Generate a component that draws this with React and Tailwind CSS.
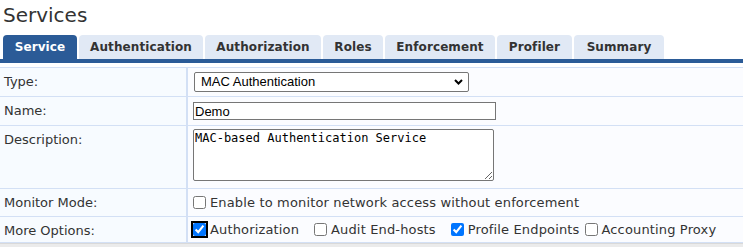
import React from 'react';

const tabs = [
  { label: 'Service', w: 'w-[74px]', active: true },
  { label: 'Authentication', w: 'w-[124px]' },
  { label: 'Authorization', w: 'w-[116px]' },
  { label: 'Roles', w: 'w-[60px]' },
  { label: 'Enforcement', w: 'w-[110px]' },
  { label: 'Profiler', w: 'w-[75px]' },
  { label: 'Summary', w: 'w-[90px]' },
];

const Check = ({ checked, focused, label, className = '' }) => (
  <label className={`flex items-center ${className}`}>
    <input
      type="checkbox"
      defaultChecked={checked}
      className={`m-0 h-[13px] w-[13px] accent-[#0075ff] ${focused ? 'rounded-[2px] outline-2 outline-offset-0 outline-black' : ''}`}
    />
    <span className="ml-[4px] tracking-[0.15px]">{label}</span>
  </label>
);

const Row = ({ label, h, children, valueClass = '' }) => (
  <div className={`flex border-b border-[#d3e0f5] ${h}`}>
    <div className="w-[187px] shrink-0 border-r border-[#d3e0f5] bg-[#f7fbff] pl-[4px] pt-[6px]">{label}</div>
    <div className={`flex-1 border-l border-[#d3e0f5] bg-[#fbfcff] pl-[5px] ${valueClass}`}>{children}</div>
  </div>
);

const App = () => {
  return (
    <div className="h-[247px] w-[743px] overflow-hidden bg-white text-[13px] leading-[16px] text-[#333] [font-family:'DejaVu_Sans',Verdana,sans-serif]">
      <h1 className="h-[35px] pl-[3px] pt-[3px] text-[20px] leading-[24px] text-[#333]">Services</h1>

      <div className="flex gap-[2px] pl-[3px]">
        {tabs.map((t) => (
          <div
            key={t.label}
            className={`flex h-[24px] items-center justify-center rounded-t-[4px] text-[12px] font-bold tracking-[0.1px] ${t.w} ${
              t.active ? 'bg-[#2b5b97] text-white' : 'bg-[#e1e9f5] text-[#333]'
            }`}
          >
            {t.label}
          </div>
        ))}
      </div>
      <div className="h-[4px] bg-[#2b5b97]" />

      <div className="mt-[4px] border-t border-[#d3e0f5]">
        <Row label="Type:" h="h-[29px]" valueClass="pt-[4px]">
          <div className="relative ml-[1px] h-[20px] w-[275px]">
            <select className="h-[20px] w-[275px] appearance-none rounded-[2px] border border-[#767676] bg-white pl-[6px] text-[13px] text-black [font-family:'Liberation_Sans',Arial,sans-serif]">
              <option>MAC Authentication</option>
            </select>
            <svg className="pointer-events-none absolute right-[6px] top-[7px]" width="9" height="6" viewBox="0 0 9 6">
              <path d="M1 1l3.5 3.5L8 1" fill="none" stroke="#000" strokeWidth="2" />
            </svg>
          </div>
        </Row>
        <Row label="Name:" h="h-[29px]" valueClass="pt-[5px]">
          <input
            defaultValue="Demo"
            className="h-[18px] w-[303px] border border-[#767676] bg-white pl-[1px] text-[13px] leading-[16px] text-black [font-family:'Liberation_Sans',Arial,sans-serif]"
          />
        </Row>
        <Row label="Description:" h="h-[63px]" valueClass="pt-[3px]">
          <textarea
            defaultValue="MAC-based Authentication Service"
            className="block h-[52px] w-[301px] rounded-[2px] border border-[#767676] bg-white px-[1px] pt-[1px] text-[12px] leading-[14px] text-black [font-family:'DejaVu_Sans_Mono',monospace]"
          />
        </Row>
        <Row label="Monitor Mode:" h="h-[28px]" valueClass="flex items-center">
          <Check label="Enable to monitor network access without enforcement" />
        </Row>
        <Row label="More Options:" h="h-[26px]" valueClass="flex items-center">
          <Check checked focused label="Authorization" />
          <Check label="Audit End-hosts" className="ml-[15px]" />
          <Check checked label="Profile Endpoints" className="ml-[15px]" />
          <Check label="Accounting Proxy" className="ml-[5px]" />
        </Row>
      </div>
      <div className="h-[10px] border-t border-[#d9d9d9] bg-[#ebebeb]" />
    </div>
  );
};

export default App;
